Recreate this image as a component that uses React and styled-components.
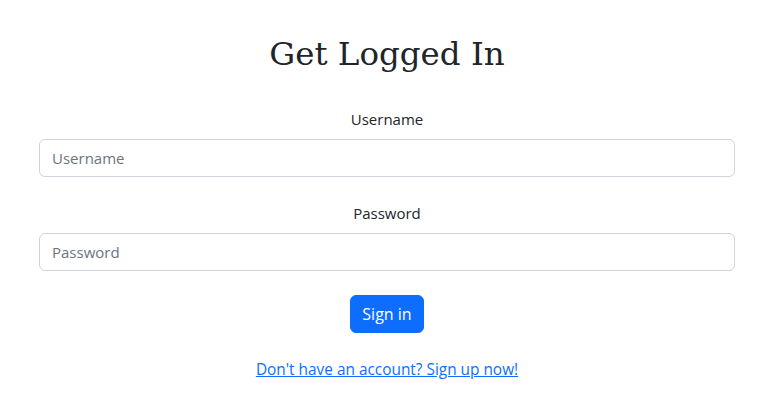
import React from "react";
import styled, { createGlobalStyle } from "styled-components";

const GlobalStyle = createGlobalStyle`
  body {
    margin: 0;
    background: #fff;
    color: #212529;
    font-family: "Segoe UI", "Open Sans", "Noto Sans", sans-serif;
    font-size: 16px;
  }
`;

const Page = styled.main`
  padding: 30px 44px 0 39px;
  display: flex;
  flex-direction: column;
  align-items: stretch;
`;

const Title = styled.h1`
  margin: 0 0 29px;
  text-align: center;
  font-family: "DejaVu Serif", "Liberation Serif", serif;
  font-weight: 400;
  font-size: 32.5px;
  line-height: 48px;
  color: #212529;
`;

const Form = styled.form`
  display: flex;
  flex-direction: column;
  gap: 24px;
`;

const Field = styled.div`
  display: flex;
  flex-direction: column;
  align-items: stretch;
`;

const Label = styled.label`
  text-align: center;
  font-size: 15px;
  line-height: 24px;
  margin-bottom: 8px;
`;

const Input = styled.input`
  box-sizing: border-box;
  height: 38px;
  padding: 6px 12px;
  font: inherit;
  font-size: 15px;
  color: #212529;
  border: 1px solid #ced4da;
  border-radius: 6px;
  outline: none;
  &::placeholder {
    color: #6c757d;
  }
`;

const Actions = styled.div`
  display: flex;
  justify-content: center;
`;

const Button = styled.button`
  box-sizing: border-box;
  height: 38px;
  width: 74px;
  padding: 0;
  font: inherit;
  font-size: 16px;
  color: #fff;
  background: #0d6efd;
  border: 1px solid #0d6efd;
  border-radius: 6px;
`;

const Footer = styled.p`
  margin: 0;
  text-align: center;
  line-height: 24px;
`;

const Link = styled.a`
  color: #0d6efd;
  text-decoration: underline;
  font-size: 15.4px;
`;

export default function App() {
  return (
    <>
      <GlobalStyle />
      <Page>
        <Title>Get Logged In</Title>
        <Form onSubmit={(e) => e.preventDefault()}>
          <Field>
            <Label htmlFor="username">Username</Label>
            <Input id="username" placeholder="Username" />
          </Field>
          <Field>
            <Label htmlFor="password">Password</Label>
            <Input id="password" type="password" placeholder="Password" />
          </Field>
          <Actions>
            <Button type="submit">Sign in</Button>
          </Actions>
          <Footer>
            <Link href="#">Don't have an account? Sign up now!</Link>
          </Footer>
        </Form>
      </Page>
    </>
  );
}
